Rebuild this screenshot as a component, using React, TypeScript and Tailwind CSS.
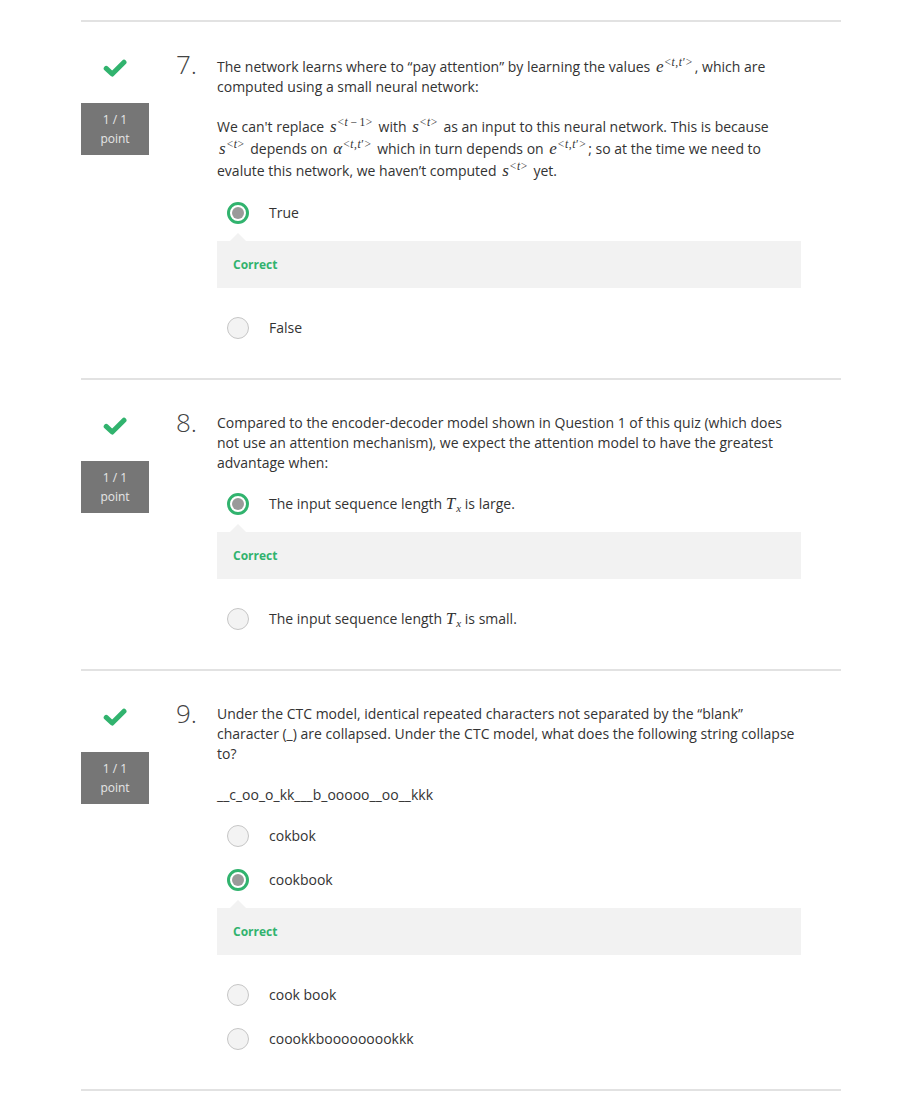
import React from 'react';

type Option = { label: React.ReactNode; selected?: boolean };

type Question = {
  num: number;
  body: React.ReactNode;
  options: Option[];
};

const Sup = ({ children }: { children: React.ReactNode }) => (
  <sup className="not-italic text-[11.5px] top-[-6px] ml-[1px] tracking-[0.6px] font-['Liberation_Serif']">{children}</sup>
);

const Sub = ({ children }: { children: React.ReactNode }) => (
  <sub className="text-[11px] italic top-[3px] ml-[1px] font-['Liberation_Serif']">{children}</sub>
);

const V = ({ children }: { children: React.ReactNode }) => (
  <span className="font-['Liberation_Serif'] italic text-[17px]">{children}</span>
);

// wrapper for inline math, a bit of air on both sides like the rendered formulas
const M = ({ children }: { children: React.ReactNode }) => (
  <span className="whitespace-nowrap mx-[2px]">{children}</span>
);

const Ett = () => (
  <M>
    <V>e</V>
    <Sup>
      &lt;<i>t</i>,<i>t</i>′&gt;
    </Sup>
  </M>
);

const St = () => (
  <M>
    <V>s</V>
    <Sup>
      &lt;<i>t</i>&gt;
    </Sup>
  </M>
);

const Tx = () => (
  <span className="whitespace-nowrap">
    <V>T</V>
    <Sub>x</Sub>
  </span>
);

const CheckIcon = () => (
  <svg width="24" height="18" viewBox="0 0 24 18" fill="none">
    <path d="M3.2 9.4 L9.2 15 L21 3.2" stroke="#31b36e" strokeWidth="5" strokeLinecap="round" strokeLinejoin="round" />
  </svg>
);

const Radio = ({ selected }: { selected?: boolean }) =>
  selected ? (
    <span className="w-[22px] h-[22px] rounded-full border-[3px] border-[#31b36e] bg-white flex items-center justify-center shrink-0">
      <span className="w-[12px] h-[12px] rounded-full bg-[#9a9a9a]" />
    </span>
  ) : (
    <span className="w-[22px] h-[22px] rounded-full border border-[#c6c6c6] bg-[#f3f3f3] shrink-0" />
  );

const questions: Question[] = [
  {
    num: 7,
    body: (
      <>
        <p className="pt-[2px]">
          The network learns where to “pay attention” by learning the values <Ett />, which are computed using a small
          neural network:
        </p>
        <p className="mt-[19px] leading-[22px]">
          We can't replace{' '}
          <M>
            <V>s</V>
            <Sup>
              &lt;<i>t</i>
              <span className="mx-[2px]">−</span>1&gt;
            </Sup>
          </M>{' '}
          with <St /> as an input to this neural network. This is because <St /> depends on{' '}
          <M>
            <V>α</V>
            <Sup>
              &lt;<i>t</i>,<i>t</i>′&gt;
            </Sup>
          </M>{' '}
          which in turn depends on <Ett />; so at the time we need to evalute this network, we haven’t computed <St /> yet.
        </p>
      </>
    ),
    options: [{ label: 'True', selected: true }, { label: 'False' }],
  },
  {
    num: 8,
    body: (
      <p>
        Compared to the encoder-decoder model shown in Question 1 of this quiz (which does not use an attention
        mechanism), we expect the attention model to have the greatest advantage when:
      </p>
    ),
    options: [
      {
        label: (
          <>
            The input sequence length <Tx /> is large.
          </>
        ),
        selected: true,
      },
      {
        label: (
          <>
            The input sequence length <Tx /> is small.
          </>
        ),
      },
    ],
  },
  {
    num: 9,
    body: (
      <>
        <p>
          Under the CTC model, identical repeated characters not separated by the “blank” character (_) are collapsed.
          Under the CTC model, what does the following string collapse to?
        </p>
        <p className="mt-[21px]">__c_oo_o_kk___b_ooooo__oo__kkk</p>
      </>
    ),
    options: [
      { label: 'cokbok' },
      { label: 'cookbook', selected: true },
      { label: 'cook book' },
      { label: 'coookkbooooooookkk' },
    ],
  },
];

const QuestionBlock = ({ q }: { q: Question }) => {
  return (
    <div className="flex border-b-2 border-[#e2e2e2] pt-[33px] pb-[28px]">
      <div className="w-[68px] shrink-0 flex flex-col items-center">
        <div className="mt-[4px]">
          <CheckIcon />
        </div>
        <div className="mt-[26px] w-[68px] h-[52px] bg-[#767676] text-[#e6e6e6] text-[12px] leading-[19px] flex flex-col items-center justify-center">
          <span>1 / 1</span>
          <span>point</span>
        </div>
      </div>

      <div className="ml-[27px] w-[41px] shrink-0 text-[26px] leading-[26px] font-light text-[#444] mt-[-4px]">
        {q.num}.
      </div>

      <div className="w-[584px] text-[14px] leading-[20px] text-[#333]">
        {q.body}

        <div className="mt-[9px]">
          {q.options.map((opt, i) => (
            <div key={i} className={i > 0 && q.options[i - 1].selected ? 'mt-[18px]' : ''}>
              <div className="h-[44px] flex items-center pl-[10px]">
                <Radio selected={opt.selected} />
                <span className="ml-[20px]">{opt.label}</span>
              </div>
              {opt.selected && (
                <div className="relative mt-[6px] h-[47px] bg-[#f2f2f2] flex items-center px-4">
                  <span className="absolute left-[13px] top-[-8px] w-0 h-0 border-l-[8px] border-r-[8px] border-b-[8px] border-l-transparent border-r-transparent border-b-[#f2f2f2]" />
                  <span className="text-[12px] font-bold text-[#31b36e]">Correct</span>
                </div>
              )}
            </div>
          ))}
        </div>
      </div>
    </div>
  );
};

export default function App() {
  return (
    <div className="bg-white min-h-[1094px] font-['Open_Sans',sans-serif] pt-[20px]">
      <div className="ml-[81px] w-[760px] border-t-2 border-[#e2e2e2]">
        {questions.map((q) => (
          <QuestionBlock key={q.num} q={q} />
        ))}
      </div>
    </div>
  );
}
